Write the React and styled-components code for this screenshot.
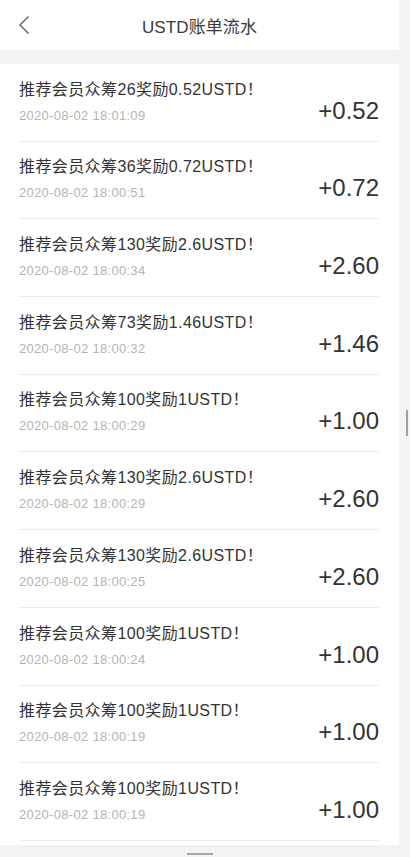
import React from 'react';
import styled, { createGlobalStyle } from 'styled-components';

const GlobalStyle = createGlobalStyle`
  html, body {
    margin: 0;
    padding: 0;
    background: #f2f3f5;
  }
  body {
    font-family: 'Liberation Sans', 'Noto Sans CJK SC', sans-serif;
    color: #333;
  }
`;

const Page = styled.div`
  display: flex;
  width: 410px;
  height: 857px;
  overflow: hidden;
  background: #f2f3f5;
`;

const Main = styled.div`
  display: flex;
  flex-direction: column;
  width: 399px;
`;

const Header = styled.div`
  position: relative;
  display: flex;
  align-items: center;
  justify-content: center;
  height: 50px;
  background: #fff;
`;

const BackButton = styled.button`
  position: absolute;
  left: 14px;
  top: 12px;
  display: flex;
  align-items: center;
  justify-content: center;
  width: 20px;
  height: 26px;
  padding: 0;
  border: none;
  background: none;
`;

const Title = styled.h1`
  margin: 0;
  font-size: 17px;
  font-weight: normal;
  color: #3a3a3a;
  letter-spacing: 0.1px;
`;

const List = styled.div`
  margin-top: 14px;
  padding: 0 20px 4px 19px;
  background: #fff;
`;

const Row = styled.div`
  display: flex;
  align-items: flex-end;
  justify-content: space-between;
  height: 77.7px;
  box-sizing: border-box;
  padding-bottom: 15px;
  border-bottom: 1px solid #ececec;
`;

const Info = styled.div`
  display: flex;
  flex-direction: column;
`;

const ItemTitle = styled.div`
  font-size: 16px;
  line-height: 26px;
  letter-spacing: 0.4px;
  color: #333;
`;

const ItemDate = styled.div`
  margin-top: 3px;
  font-size: 13px;
  line-height: 20px;
  letter-spacing: 0.3px;
  color: #b4b4b4;
`;

const Amount = styled.div`
  font-size: 24px;
  line-height: 30px;
  color: #333;
`;

const BottomBar = styled.div`
  display: flex;
  justify-content: center;
  flex: 1;
  padding-top: 8px;
  background: #f2f3f5;
`;

const Handle = styled.div`
  width: 26px;
  height: 2px;
  background: #a8a8a8;
`;

const Rail = styled.div`
  display: flex;
  justify-content: flex-end;
  width: 11px;
  padding: 410px 2px 0 0;
  box-sizing: border-box;
`;

const Thumb = styled.div`
  width: 2px;
  height: 26px;
  background: #a0a0a0;
`;

const records = [
  { title: '推荐会员众筹26奖励0.52USTD！', time: '2020-08-02 18:01:09', amount: '+0.52' },
  { title: '推荐会员众筹36奖励0.72USTD！', time: '2020-08-02 18:00:51', amount: '+0.72' },
  { title: '推荐会员众筹130奖励2.6USTD！', time: '2020-08-02 18:00:34', amount: '+2.60' },
  { title: '推荐会员众筹73奖励1.46USTD！', time: '2020-08-02 18:00:32', amount: '+1.46' },
  { title: '推荐会员众筹100奖励1USTD！', time: '2020-08-02 18:00:29', amount: '+1.00' },
  { title: '推荐会员众筹130奖励2.6USTD！', time: '2020-08-02 18:00:29', amount: '+2.60' },
  { title: '推荐会员众筹130奖励2.6USTD！', time: '2020-08-02 18:00:25', amount: '+2.60' },
  { title: '推荐会员众筹100奖励1USTD！', time: '2020-08-02 18:00:24', amount: '+1.00' },
  { title: '推荐会员众筹100奖励1USTD！', time: '2020-08-02 18:00:19', amount: '+1.00' },
  { title: '推荐会员众筹100奖励1USTD！', time: '2020-08-02 18:00:19', amount: '+1.00' },
];

const App = () => (
  <React.Fragment>
    <GlobalStyle />
    <Page>
      <Main>
        <Header>
          <BackButton aria-label="back">
            <svg width="12" height="20" viewBox="0 0 12 20">
              <path d="M10.5 1.5 L2 10 L10.5 18.5" fill="none" stroke="#6b6b6b" strokeWidth="1.5" />
            </svg>
          </BackButton>
          <Title>USTD账单流水</Title>
        </Header>
        <List>
          {records.map((item, i) => (
            <Row key={i}>
              <Info>
                <ItemTitle>{item.title}</ItemTitle>
                <ItemDate>{item.time}</ItemDate>
              </Info>
              <Amount>{item.amount}</Amount>
            </Row>
          ))}
        </List>
        <BottomBar>
          <Handle />
        </BottomBar>
      </Main>
      <Rail>
        <Thumb />
      </Rail>
    </Page>
  </React.Fragment>
);

export default App;
